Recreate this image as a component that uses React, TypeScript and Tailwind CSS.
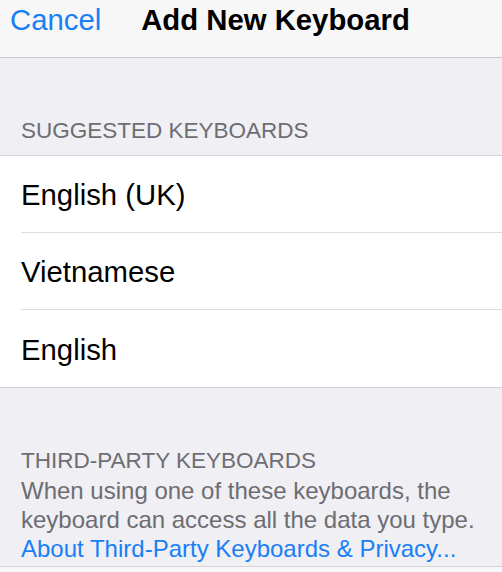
import React from "react";

export default function App() {
  const rows = ["English (UK)", "Vietnamese", "English"];
  return (
    <div
      className="w-[502px] h-[572px] overflow-hidden bg-[#efeff4] text-black"
      style={{ fontFamily: '"Liberation Sans", Arial, Helvetica, sans-serif' }}
    >
      {/* Nav bar */}
      <div className="h-[58px] bg-[#f7f7f7] border-b border-[#c8c7cc] flex items-start pt-[5px] pl-[10px]">
        <span className="text-[29.3px] leading-[29px] text-[#1a7ff5]">Cancel</span>
        <span className="ml-[40px] text-[29.3px] leading-[29px] font-bold">Add New Keyboard</span>
      </div>

      {/* Suggested header */}
      <div className="pt-[59px] pb-[11px] pl-[21px] text-[22.5px] leading-[27px] text-[#6d6d72]">
        SUGGESTED KEYBOARDS
      </div>

      {/* List */}
      <div className="bg-white border-t border-b border-[#d4d3d8]">
        {rows.map((r, i) => (
          <div key={r} className="h-[77px] flex flex-col">
            <div className="flex-1 flex items-center pl-[21px] pt-[1px] text-[29.3px] leading-[29px]">{r}</div>
            {i < rows.length - 1 && <div className="ml-[21px] h-px bg-[#dcdbe0]" />}
          </div>
        ))}
      </div>

      {/* Third-party section */}
      <div className="pt-[58px] pb-[3px] pl-[21px] pr-[20px] border-b border-[#d4d3d8]">
        <div className="text-[22.5px] leading-[30px] text-[#6d6d72]">THIRD-PARTY KEYBOARDS</div>
        <div className="text-[24px] leading-[29px] text-[#6d6d72]">
          When using one of these keyboards, the keyboard can access all the data you type.
          <span className="block text-[#1a7ff5]">About Third-Party Keyboards &amp; Privacy...</span>
        </div>
      </div>
      <div className="h-[20px] bg-[#f7f7f9]" />
    </div>
  );
}
